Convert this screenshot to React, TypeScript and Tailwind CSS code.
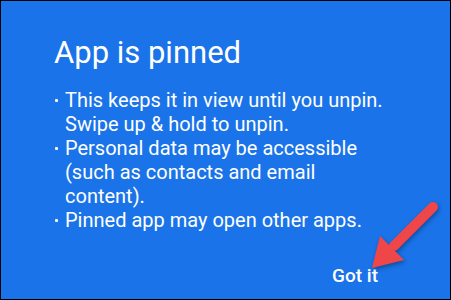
const bullets = [
  ['This keeps it in view until you unpin.', 'Swipe up & hold to unpin.'],
  ['Personal data may be accessible', '(such as contacts and email', 'content).'],
  ['Pinned app may open other apps.'],
]

function Arrow() {
  return (
    <svg
      className="absolute left-0 top-0 pointer-events-none"
      width="451"
      height="300"
      viewBox="0 0 451 300"
      style={{ filter: 'drop-shadow(1px 2px 2px rgba(0,0,0,0.35))' }}
    >
      <line x1="432" y1="206" x2="393" y2="245" stroke="#ef4649" strokeWidth="10" strokeLinecap="round" />
      <polygon points="371,267 379,235 403,259" fill="#ef4649" />
    </svg>
  )
}

export default function App() {
  return (
    <div
      className="relative w-[451px] h-[300px] bg-[#1a73e8] border border-black flex flex-col text-white"
      style={{ fontFamily: 'Roboto, "Noto Sans", sans-serif' }}
    >
      <div className="pl-[53px] pt-[34px]">
        <h1 className="text-[31px] leading-[36px] font-normal">App is pinned</h1>
        <ul className="mt-[17px] text-[20px] leading-[24px]">
          {bullets.map((lines, i) => (
            <li key={i} className="flex">
              <div className="w-[11px] shrink-0 pl-[1px]">
                <div className="mt-[11px] w-[3px] h-[3px] bg-white rounded-[1px]" />
              </div>
              <div>
                {lines.map((l, j) => (
                  <div key={j}>{l}</div>
                ))}
              </div>
            </li>
          ))}
        </ul>
      </div>
      <div className="flex-1" />
      <div className="flex justify-end pr-[72px] pb-[11px]">
        <span className="text-[19px] leading-[24px] font-medium">Got it</span>
      </div>
      <Arrow />
    </div>
  )
}
